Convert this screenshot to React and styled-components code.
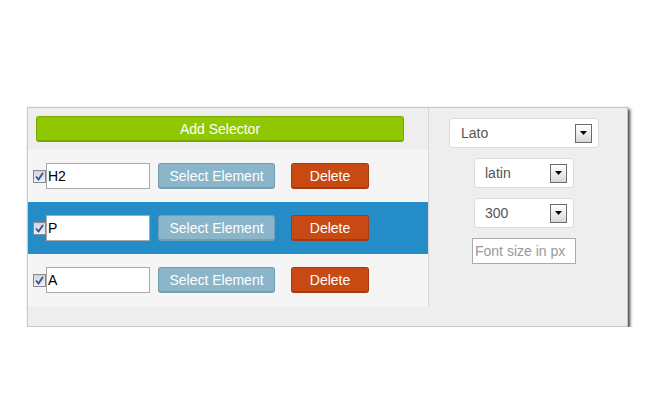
import React from 'react';
import styled, { createGlobalStyle } from 'styled-components';

const GlobalStyle = createGlobalStyle`
  body {
    margin: 0;
    background: #fff;
    font-family: 'Liberation Sans', Arial, sans-serif;
  }
`;

const StyledPage = styled.div`
  padding: 107px 0 0 27px;
`;

const StyledPanel = styled.div`
  width: 599px;
  height: 218px;
  display: flex;
  background: #eeeeee;
  border: 1px solid #c8c8c8;
  box-shadow: 2px 2px 3px rgba(0, 0, 0, 0.75);
`;

const StyledSelectors = styled.div`
  width: 400px;
  height: 199px;
  border-right: 1px solid #d6d6d6;
  display: flex;
  flex-direction: column;
`;

const StyledHeader = styled.div`
  height: 42px;
  padding: 8px 24px 0 8px;
  box-sizing: border-box;
`;

const StyledButton = styled.button`
  font-family: 'Liberation Sans', Arial, sans-serif;
  font-size: 14px;
  color: #fff;
  border-radius: 3px;
  height: 26px;
  padding: 0;
  cursor: pointer;
  background: ${({ color }) => color};
  border: 1px solid ${({ edge }) => edge};
  border-bottom-width: 2px;
  width: ${({ width }) => width}px;
`;

const StyledRow = styled.div`
  height: 52px;
  display: flex;
  align-items: center;
  padding-left: 5px;
  background: ${({ active }) => (active ? '#248dc8' : '#f5f5f5')};
`;

const StyledCheck = styled.span`
  width: 11px;
  height: 11px;
  border: 1px solid #8a8a8a;
  background: linear-gradient(#d4d4d4, #f2f2f2);
  display: flex;
  align-items: center;
  justify-content: center;
`;

const StyledTextInput = styled.input`
  box-sizing: border-box;
  width: 104px;
  height: 26px;
  border: 1px solid #aaaaaa;
  background: #fff;
  font-family: 'Liberation Sans', Arial, sans-serif;
  font-size: 14px;
  color: #000;
  padding: 0 1px;
  margin: 0 8px 0 0;
  outline: none;

  &::placeholder {
    color: #999;
  }
`;

const StyledGap = styled.span`
  width: 16px;
`;

const StyledFonts = styled.div`
  flex: 1;
  display: flex;
  flex-direction: column;
  align-items: center;
  padding: 10px 8px 0 0;
  gap: 10px;
`;

const StyledSelect = styled.div`
  box-sizing: border-box;
  width: ${({ width }) => width}px;
  height: 30px;
  background: #fff;
  border: 1px solid #dcdcdc;
  border-radius: 4px;
  display: flex;
  align-items: center;
  justify-content: space-between;
  padding: 0 6px 0 ${({ indent }) => indent}px;
  font-size: 14px;
  color: #555;
`;

const StyledArrow = styled.span`
  box-sizing: border-box;
  width: 17px;
  height: 19px;
  border: 1px solid #6c6c6c;
  background: linear-gradient(#ffffff, #d8d8d8);
  display: flex;
  align-items: center;
  justify-content: center;
`;

const StyledSizeInput = styled(StyledTextInput)`
  margin: 0;
  padding: 0 2px;
`;

const Check = () => (
  <StyledCheck>
    <svg width='9' height='9' viewBox='0 0 9 9'>
      <path d='M1 4.5 L3.5 7.5 L8 1' fill='none' stroke='#2b50a8' strokeWidth='1.8' />
    </svg>
  </StyledCheck>
);

const Select = ({ width, indent, children }) => (
  <StyledSelect width={width} indent={indent}>
    <span>{children}</span>
    <StyledArrow>
      <svg width='7' height='4' viewBox='0 0 7 4'>
        <path d='M0 0 H7 L3.5 4 Z' fill='#000' />
      </svg>
    </StyledArrow>
  </StyledSelect>
);

const selectors = [
  { name: 'H2', active: false },
  { name: 'P', active: true },
  { name: 'A', active: false },
];

const App = () => (
  <>
    <GlobalStyle />
    <StyledPage>
      <StyledPanel>
        <StyledSelectors>
          <StyledHeader>
            <StyledButton color='#8fc800' edge='#79a900' width={368}>
              Add Selector
            </StyledButton>
          </StyledHeader>
          {selectors.map(({ name, active }) => (
            <StyledRow key={name} active={active}>
              <Check />
              <StyledTextInput defaultValue={name} />
              <StyledButton color='#8bb5c9' edge='#739fb5' width={117}>
                Select Element
              </StyledButton>
              <StyledGap />
              <StyledButton color='#c94913' edge='#a63a0e' width={78}>
                Delete
              </StyledButton>
            </StyledRow>
          ))}
        </StyledSelectors>
        <StyledFonts>
          <Select width={150} indent={11}>Lato</Select>
          <Select width={100} indent={10}>latin</Select>
          <Select width={100} indent={10}>300</Select>
          <StyledSizeInput placeholder='Font size in px' />
        </StyledFonts>
      </StyledPanel>
    </StyledPage>
  </>
);

export default App;
